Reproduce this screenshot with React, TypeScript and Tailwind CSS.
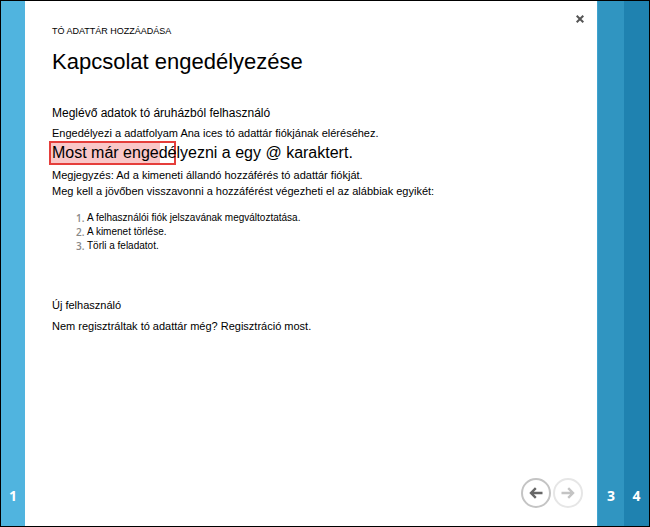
import React from 'react';

const reasons = [
  'A felhasználói fiók jelszavának megváltoztatása.',
  'A kimenet törlése.',
  'Törli a feladatot.',
];

function Arrow({ className }: { className: string }) {
  return (
    <svg viewBox="0 0 14 14" className={className} fill="none" stroke="currentColor" strokeWidth="2.4" aria-hidden="true">
      <path d="M13.5 7H2M6.8 2.2L2 7l4.8 4.8" />
    </svg>
  );
}

export default function App() {
  return (
    <div className="flex min-h-screen border border-black bg-white font-['Liberation_Sans',Arial,sans-serif] text-[11px] leading-4 text-black">
      <button aria-label="1" className="flex w-6 shrink-0 items-end justify-center bg-[#50b4df] pb-5 font-['Open_Sans',sans-serif] text-sm font-bold text-white">
        1
      </button>

      <main className="relative flex min-w-0 flex-1 flex-col pl-[27px]">
        <button aria-label="Bezárás" className="absolute top-3 right-[11px] flex size-3 items-center justify-center text-[#555]">
          <svg viewBox="0 0 8 8" className="size-2" stroke="currentColor" strokeWidth="2" aria-hidden="true">
            <path d="M.7.7l6.6 6.6M7.3.7L.7 7.3" />
          </svg>
        </button>

        <p className="mt-[22px] text-[9px] leading-4">TÓ ADATTÁR HOZZÁADÁSA</p>
        <h1 className="mt-[7px] text-[22px] leading-8">Kapcsolat engedélyezése</h1>

        <h2 className="mt-[27px] text-xs leading-4">Meglévő adatok tó áruházból felhasználó</h2>
        <p className="mt-1">Engedélyezi a adatfolyam Ana ices tó adattár fiókjának eléréséhez.</p>
        <div className="relative z-0 flex h-6 items-center text-base">
          <span className="absolute top-0 -left-[3px] -z-10 flex h-6 w-[127px] border-2 border-[#e53e3b]">
            <span className="w-[109px] bg-[#f9c7c8]" />
          </span>
          <a href="#authorize">Most már engedélyezni a egy @ karaktert.</a>
        </div>
        <p className="mt-[2px]">Megjegyzés: Ad a kimeneti állandó hozzáférés tó adattár fiókját.</p>
        <p>Meg kell a jövőben visszavonni a hozzáférést végezheti el az alábbiak egyikét:</p>
        <ol className="mt-3 pl-6 text-[10px] leading-[14px]">
          {reasons.map((reason, i) => (
            <li key={reason} className="flex">
              <span className="w-[11px] font-['Open_Sans',sans-serif] font-semibold text-[#888]">{i + 1}.</span>
              <span>{reason}</span>
            </li>
          ))}
        </ol>

        <h2 className="mt-11">Új felhasználó</h2>
        <p className="mt-[5px]">
          Nem regisztráltak tó adattár még? <a href="#register">Regisztráció most.</a>
        </p>

        <nav aria-label="Lapozás" className="mt-auto mr-[14px] mb-[18px] flex justify-end gap-[2px]">
          <button aria-label="Vissza" className="flex size-[30px] items-center justify-center rounded-full border-2 border-[#c4c4c4] text-[#666]">
            <Arrow className="size-[14px]" />
          </button>
          <button aria-label="Tovább" disabled className="flex size-[30px] items-center justify-center rounded-full border-2 border-[#e6e6e6] text-[#c4c4c4]">
            <Arrow className="size-[14px] rotate-180" />
          </button>
        </nav>
      </main>

      <button aria-label="3" className="flex w-[27px] shrink-0 items-end justify-center border-l border-[#3fa3cf] bg-[#3095c1] pb-5 font-['Open_Sans',sans-serif] text-sm font-bold text-white">
        3
      </button>
      <button aria-label="4" className="flex w-[25px] shrink-0 items-end justify-center bg-[#1f82b0] pb-5 font-['Open_Sans',sans-serif] text-sm font-bold text-white">
        4
      </button>
    </div>
  );
}
